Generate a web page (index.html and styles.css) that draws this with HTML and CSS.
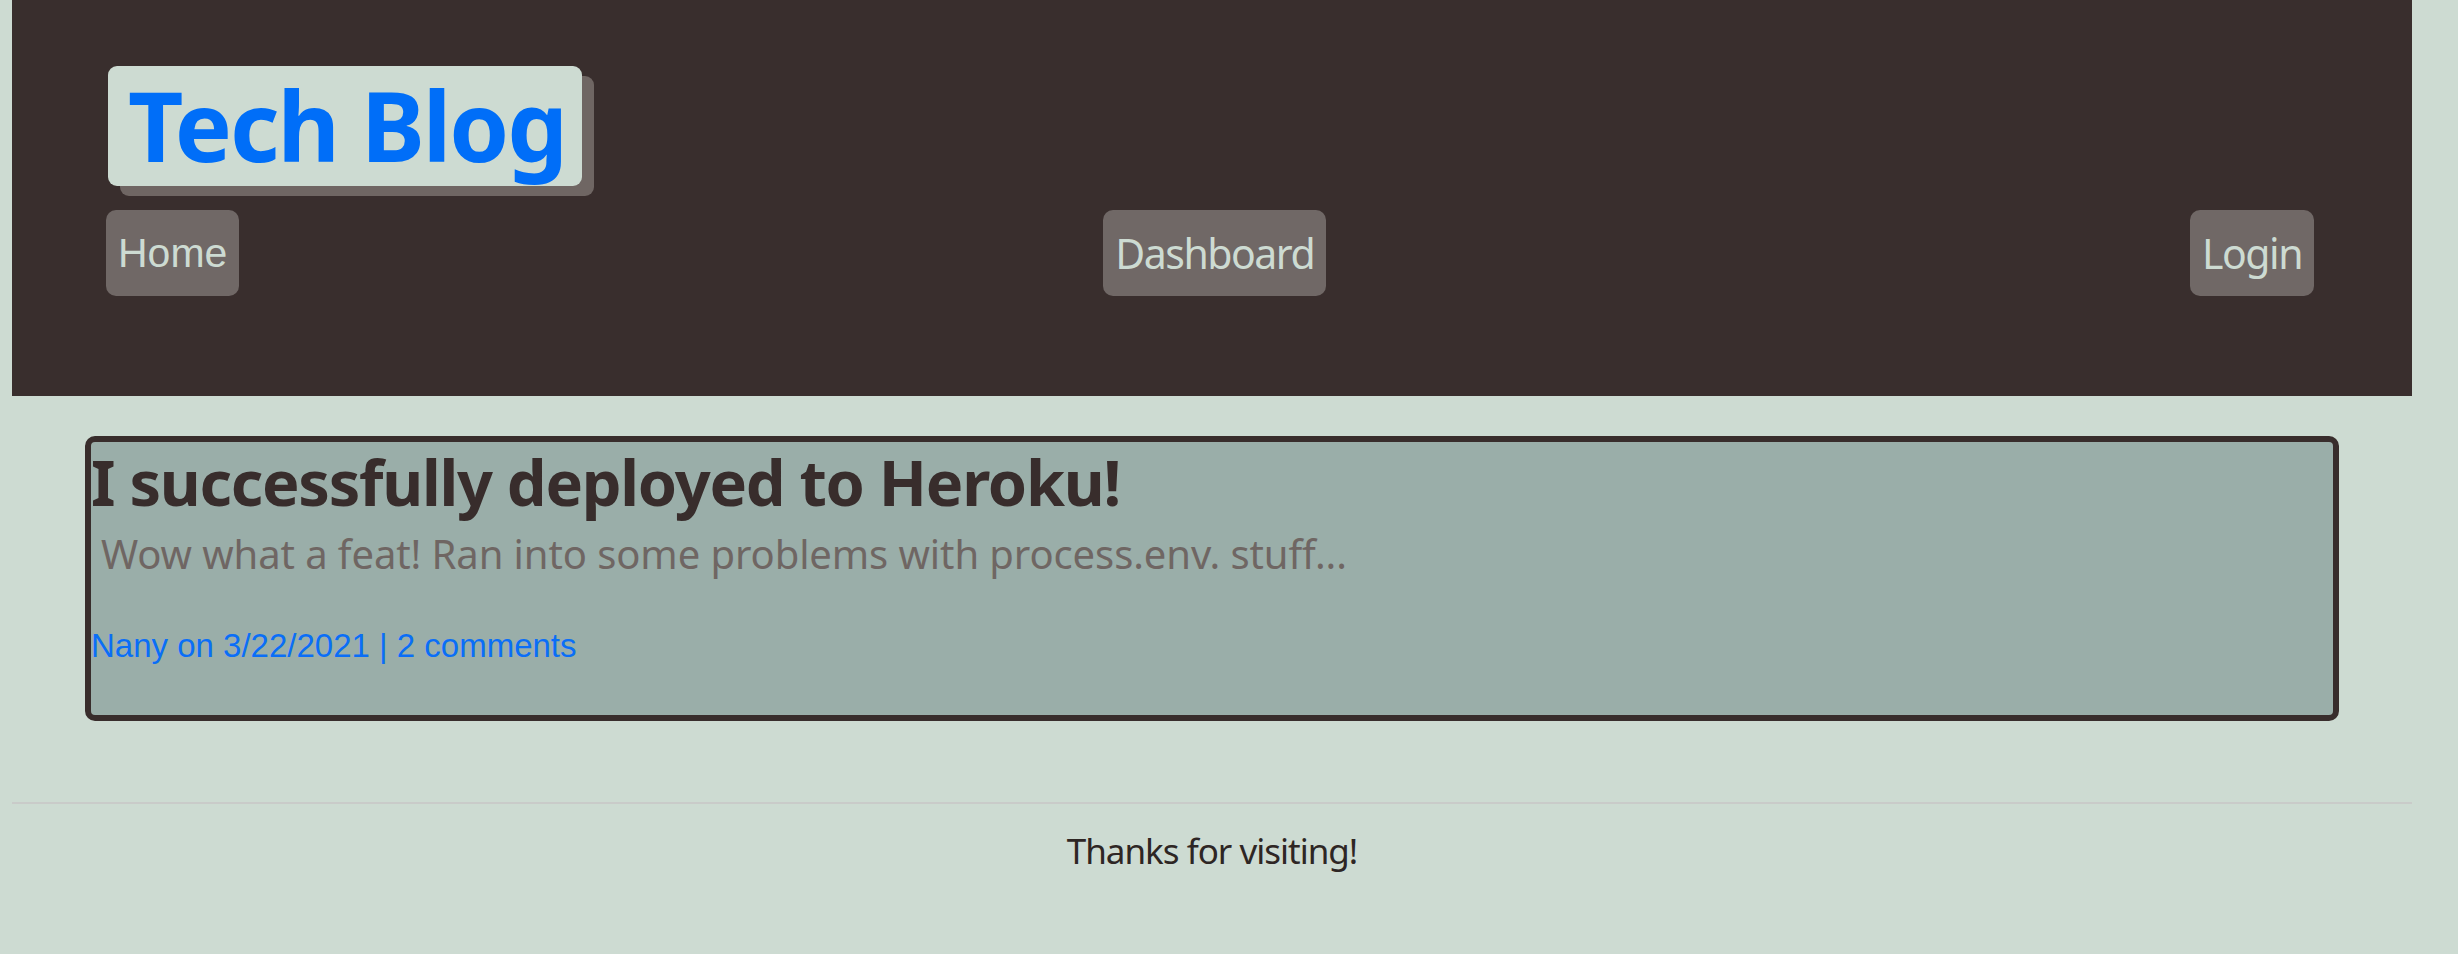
FILE: index.html
```html
<!DOCTYPE html>
<html lang="en">
<head>
<meta charset="utf-8">
<title>Tech Blog</title>
<link rel="stylesheet" href="styles.css">
</head>
<body>
<div class="page">
  <header class="site-header">
    <h1 class="brand">Tech Blog</h1>
    <nav class="nav">
      <a class="nav-btn nav-btn--plain" href="#">Home</a>
      <a class="nav-btn" href="#">Dashboard</a>
      <a class="nav-btn" href="#">Login</a>
    </nav>
  </header>
  <main class="content">
    <article class="post">
      <h2 class="post-title">I successfully deployed to Heroku!</h2>
      <p class="post-body">Wow what a feat! Ran into some problems with process.env. stuff...</p>
      <p class="post-meta">Nany on 3/22/2021 | 2 comments</p>
    </article>
  </main>
  <footer class="site-footer">Thanks for visiting!</footer>
</div>
</body>
</html>
```

FILE: styles.css
```css
html, body {
  margin: 0;
  padding: 0;
  background: #cddbd2;
}

body {
  font-family: "Noto Sans", "Open Sans", sans-serif;
  color: #2e2624;
}

.page {
  margin: 0 46px 0 12px;
}

.site-header {
  background: #392e2d;
  padding: 66px 98px 100px 94px;
  display: flex;
  flex-direction: column;
  align-items: flex-start;
}

.brand {
  margin: 0 0 0 2px;
  width: 474px;
  height: 120px;
  box-sizing: border-box;
  padding: 11px 0 0 20px;
  background: #cddbd2;
  border-radius: 9px;
  box-shadow: 12px 10px 0 #6f6663;
  color: #006ef8;
  font-size: 96px;
  line-height: 96px;
  font-weight: 700;
  letter-spacing: -2px;
  white-space: nowrap;
}

.nav {
  align-self: stretch;
  margin-top: 24px;
  display: flex;
  justify-content: space-between;
}

.nav-btn {
  display: block;
  height: 86px;
  box-sizing: border-box;
  padding: 15px 12px;
  background: #706866;
  border-radius: 10px;
  color: #cddbd2;
  font-size: 41px;
  line-height: 56px;
  letter-spacing: -1.5px;
  text-decoration: none;
}

.nav-btn--plain {
  font-family: "Liberation Sans", Arial, sans-serif;
  letter-spacing: 0;
}

.content {
  padding: 40px 73px 0;
}

.post {
  border: 6px solid #382d2c;
  border-radius: 10px;
  background: #9aaea9;
  padding: 0 0 49px;
}

.post-title {
  margin: 2px 0 0;
  font-size: 63px;
  line-height: 76px;
  font-weight: 700;
  letter-spacing: -1.25px;
  color: #382d2c;
}

.post-body {
  margin: 10px 0 0 10px;
  font-size: 40px;
  line-height: 48px;
  letter-spacing: -0.1px;
  color: #6f6663;
}

.post-meta {
  margin: 48px 0 0;
  font-family: "Liberation Sans", Arial, sans-serif;
  font-size: 33px;
  line-height: 40px;
  color: #0a6ef7;
}

.site-footer {
  margin-top: 81px;
  border-top: 2px solid #c9cbc9;
  padding-top: 25px;
  text-align: center;
  font-size: 35px;
  line-height: 44px;
  letter-spacing: -1px;
  color: #2e2624;
}
```
